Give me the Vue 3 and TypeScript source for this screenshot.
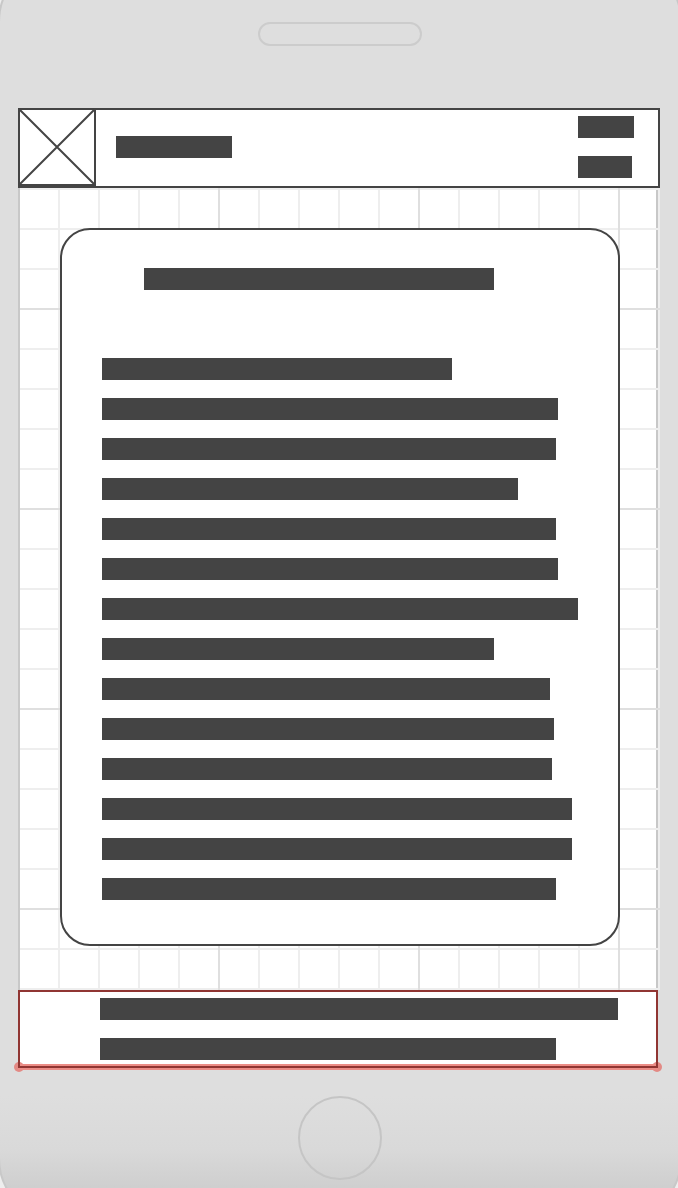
<script setup lang="ts">
const paragraph: number[] = [350, 456, 454, 416, 454, 456, 476, 392, 448, 452, 450, 470, 470, 454]
const actions: number[] = [56, 54]
const footerLines: number[] = [518, 456]
</script>

<template>
  <div class="phone">
    <div class="shell"></div>
    <div class="bezel top"><div class="speaker"></div></div>
    <div class="screen">
      <header class="header">
        <svg class="image" viewBox="0 0 78 78" aria-hidden="true">
          <rect x="1" y="1" width="76" height="76" />
          <path d="M1 1 77 77M77 1 1 77" />
        </svg>
        <div class="bar brand"></div>
        <nav class="actions">
          <div v-for="(w, i) in actions" :key="i" class="bar" :style="{ width: w + 'px' }"></div>
        </nav>
      </header>
      <main class="canvas">
        <article class="card">
          <div class="bar heading"></div>
          <div class="lines">
            <div v-for="(w, i) in paragraph" :key="i" class="bar" :style="{ width: w + 'px' }"></div>
          </div>
        </article>
      </main>
      <footer class="footer">
        <div v-for="(w, i) in footerLines" :key="i" class="bar" :style="{ width: w + 'px' }"></div>
        <span class="handle start"></span>
        <span class="handle end"></span>
        <div class="outline"></div>
      </footer>
    </div>
    <div class="bezel bottom"><div class="home"></div></div>
  </div>
</template>

<style>
body {
  margin: 0;
  background: #eee;
}
</style>

<style scoped>
* {
  box-sizing: border-box;
}
.phone {
  position: relative;
  overflow: hidden;
  padding: 22px 18px 8px;
  min-height: 100vh;
}
.shell {
  position: absolute;
  inset: -42px -4px -34px -2px;
  border: 2px solid #c8c8c8;
  border-radius: 64px;
  background: linear-gradient(to top, #c8c8c8, #cfcfcf 34px, #d9d9d9 70px, #dedede 124px);
}
.bezel {
  position: relative;
  display: flex;
  justify-content: center;
  padding-left: 2px;
}
.top {
  margin-bottom: 62px;
}
.bottom {
  margin-top: 28px;
}
.speaker {
  width: 164px;
  height: 24px;
  border: 2px solid #ccc;
  border-radius: 12px;
}
.screen {
  position: relative;
}
.header {
  display: flex;
  align-items: flex-start;
  height: 80px;
  background: #fff;
  box-shadow: inset 0 0 0 2px #444;
}
.image {
  width: 78px;
  height: 78px;
  flex: none;
  fill: none;
  stroke: #444;
  stroke-width: 2;
}
.bar {
  height: 22px;
  max-width: 100%;
  background: #444;
}
.brand {
  width: 116px;
  margin: 28px auto 0 20px;
}
.actions {
  display: grid;
  gap: 18px;
  width: 56px;
  margin: 8px 26px 0 0;
}
.canvas {
  padding: 40px 40px 44px 42px;
  background:
    linear-gradient(#c8c8c8, #c8c8c8) 0 0 / 2px 100% no-repeat,
    linear-gradient(#dfdfdf 2px, transparent 2px) 0 120px / 100% 200px,
    linear-gradient(90deg, #dfdfdf 2px, transparent 2px) 0 0 / 200px 100%,
    linear-gradient(#eee 2px, transparent 2px) 0 0 / 100% 40px,
    linear-gradient(#c8c8c8, #c8c8c8) calc(100% - 2px) 0 / 2px 100% no-repeat,
    linear-gradient(90deg, #eee 2px, transparent 2px) 0 0 / 40px 100%,
    #fff;
}
.card {
  padding: 38px 40px 44px;
  border: 2px solid #444;
  border-radius: 30px;
  background: #fff;
}
.heading {
  width: 350px;
  margin: 0 0 68px 42px;
}
.lines {
  display: grid;
  gap: 18px;
}
.footer {
  position: relative;
  display: grid;
  gap: 18px;
  margin-right: 2px;
  padding: 8px 38px 8px 82px;
  background: #fff;
}
.footer::after {
  content: '';
  position: absolute;
  inset: auto 0 -2px;
  height: 6px;
  background: #eb8c86;
}
.handle {
  position: absolute;
  bottom: -4px;
  width: 10px;
  height: 10px;
  border-radius: 50%;
  background: #e38a85;
}
.start {
  left: -4px;
}
.end {
  right: -4px;
}
.outline {
  position: absolute;
  inset: 0;
  z-index: 1;
  border: 2px solid #903532;
}
.home {
  width: 84px;
  height: 84px;
  border: 2px solid #c5c5c5;
  border-radius: 50%;
}
</style>
